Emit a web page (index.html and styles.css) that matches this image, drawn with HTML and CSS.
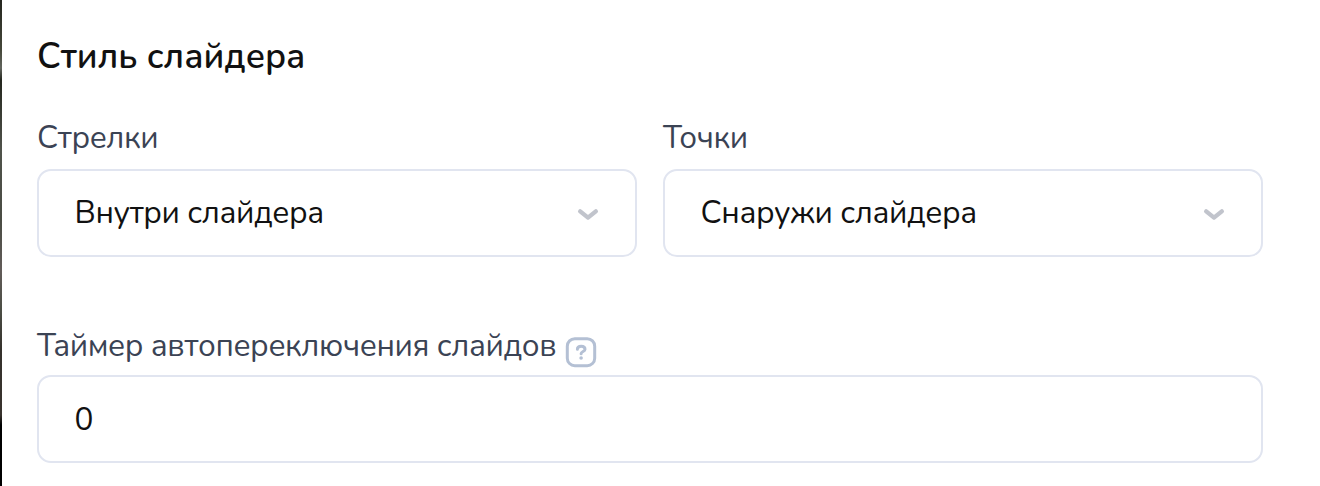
FILE: index.html
```html
<!DOCTYPE html>
<html lang="ru">
  <head>
    <meta charset="utf-8">
    <title>Стиль слайдера</title>
    <link rel="stylesheet" href="styles.css">
  </head>
  <body>
    <div class="preview-edge"></div>
    <form class="settings">
      <h2 class="settings-title">Стиль слайдера</h2>
      <div class="row">
        <div class="field">
          <div class="label">Стрелки</div>
          <button type="button" class="control select">
            <span>Внутри слайдера</span>
            <svg class="chevron" width="22" height="14" viewBox="0 0 22 14">
              <path d="M3.2 3.4L11 9.6L18.8 3.4" />
            </svg>
          </button>
        </div>
        <div class="field">
          <div class="label">Точки</div>
          <button type="button" class="control select">
            <span>Снаружи слайдера</span>
            <svg class="chevron" width="22" height="14" viewBox="0 0 22 14">
              <path d="M3.2 3.4L11 9.6L18.8 3.4" />
            </svg>
          </button>
        </div>
      </div>
      <div class="field">
        <label class="label label-timer" for="timer">
          <span>Таймер автопереключения слайдов</span>
          <svg class="help" width="32" height="32" viewBox="0 0 32 32">
            <rect x="2.3" y="2.7" width="27.4" height="27" rx="7.5" />
            <path d="M12.4 13.2C12.4 9.2 20 9.2 20 13.2C20 15.6 16.1 15.4 16.1 17.8" />
            <circle cx="16.1" cy="22" r="1.8" />
          </svg>
        </label>
        <input class="control" id="timer" type="text" value="0">
      </div>
    </form>
  </body>
</html>
```

FILE: styles.css
```css
* {
  box-sizing: border-box;
}
body {
  display: flex;
  margin: 0;
  height: 486px;
  overflow: hidden;
  background: #fff;
  color: #111;
  font-family: Nunito, "Noto Sans", sans-serif;
  font-size: 31.5px;
  letter-spacing: -0.4px;
}
/* sliver of the slider preview left of the panel */
.preview-edge {
  width: 2px;
  background: linear-gradient(#25261f 0, #45483a 50px, #62655e 68px, #25271f 80px, #50534b 150px, #4a4c44 220px, #625c59 270px, #4c4e45 310px, #35312c 350px, #38332e 415px, #000 425px);
}
.settings {
  width: 1226px;
  margin-left: 35px;
}
.settings-title {
  margin: 35px 0 0;
  font-size: 35.2px;
  font-weight: 600;
  line-height: 42px;
  letter-spacing: 0;
}
.row {
  display: flex;
  gap: 26px;
  margin: 40px 0 66px;
}
.field {
  flex: 1;
}
.label {
  display: flex;
  align-items: center;
  height: 42px;
  margin-bottom: 10px;
  color: #3b4354;
  line-height: 42px;
  white-space: nowrap;
}
.label-timer {
  padding-top: 4px;
}
.control {
  display: flex;
  align-items: center;
  justify-content: space-between;
  width: 100%;
  height: 88px;
  padding: 0 36px 0 35.5px;
  border: 2px solid #e1e5f0;
  border-radius: 14px;
  background: #fff;
  color: #111;
  font: inherit;
  letter-spacing: inherit;
}
.select {
  padding-bottom: 2px;
}
.chevron {
  margin-top: 5px;
  fill: none;
  stroke: #c1c4cc;
  stroke-width: 4.4;
  stroke-linecap: round;
  stroke-linejoin: round;
}
.help {
  margin: 12px 0 0 8.5px;
  fill: none;
  stroke: #b4c0d4;
  stroke-width: 3;
  stroke-linecap: round;
}
.help circle {
  fill: #b4c0d4;
  stroke: none;
}
```
